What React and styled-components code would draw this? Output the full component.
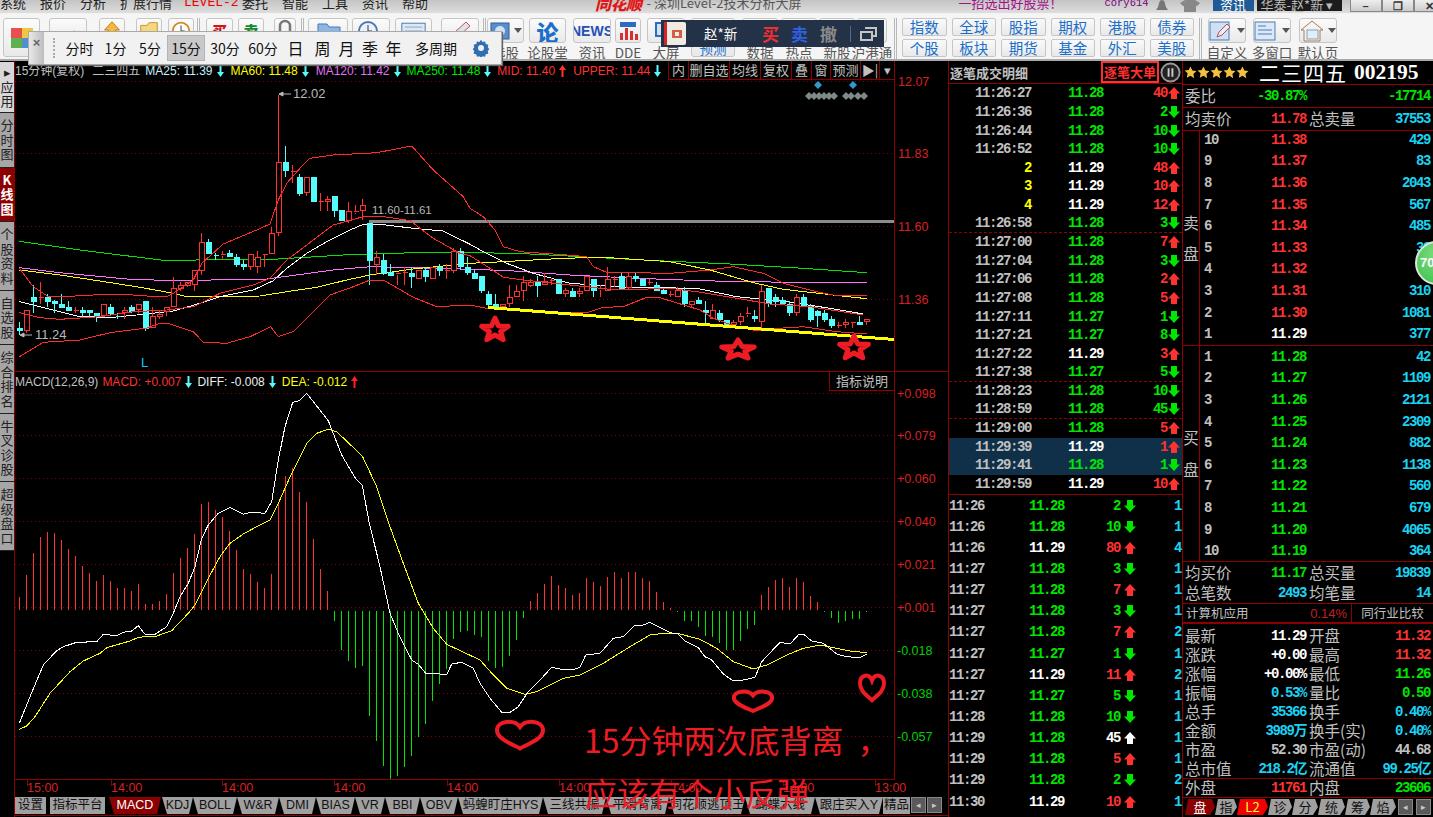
import React from 'react';
import styled, { createGlobalStyle } from 'styled-components';

const CJK = '"Noto Sans CJK SC", sans-serif';
const SANS = '"Liberation Sans", "Noto Sans CJK SC", sans-serif';
const MONO = '"Liberation Mono", "Noto Sans CJK SC", monospace';

const LINE = '#8b0000';
const RED = '#ff3232';
const GREEN = '#00e600';
const CYAN = '#19d3f3';
const AQUA = '#54fcfc';
const GREY = '#c0c0c0';

const GlobalStyle = createGlobalStyle`
  html, body {
    margin: 0;
    padding: 0;
    background: #000;
    overflow: hidden;
  }
  * { box-sizing: border-box; }
`;

const Page = styled.div`
  position: relative;
  width: 1433px;
  height: 817px;
  overflow: hidden;
  background: #000;
  font-family: ${CJK};
`;

/* ---------- title bar ---------- */
const TitleBar = styled.div`
  display: flex;
  align-items: flex-start;
  height: 14px;
  overflow: hidden;
  background: linear-gradient(#c4c4c4, #dedede);
  border-bottom: 1px solid #f2f2f2;
`;
const MenuItem = styled.span`
  flex: none;
  width: 40px;
  margin-top: -7px;
  font: ${(p) => (p.$level ? `13px ${MONO}` : `13px ${CJK}`)};
  line-height: 20px;
  color: ${(p) => (p.$level ? '#f00000' : '#222')};
  white-space: nowrap;
`;
const LevelSlot = styled(MenuItem)`
  width: 58px;
  margin-left: 24px;
`;
const Logo = styled.span`
  flex: none;
  margin: -7px 0 0 153px;
  font: italic 900 16px/20px ${CJK};
  color: #e01818;
  letter-spacing: -0.5px;
`;
const AppTitle = styled.span`
  flex: none;
  margin: -7px 0 0 5px;
  font: 13px/20px ${CJK};
  color: #555;
`;
const Slogan = styled.span`
  flex: none;
  margin: -7px 0 0 157px;
  font: 13px/20px ${CJK};
  color: #a4108c;
`;
const UserName = styled.span`
  flex: none;
  margin: -7px 0 0 42px;
  font: 10.5px/20px ${MONO};
  color: #800080;
`;
const NewsBtn = styled.span`
  flex: none;
  width: 41px;
  height: 11px;
  margin-left: 13px;
  background: #1d5a96;
  color: #fff;
  font: 13px/10px ${CJK};
  text-align: center;
`;
const AccountBtn = styled.span`
  flex: none;
  width: 85px;
  height: 11px;
  margin-left: 3px;
  padding-left: 4px;
  background: #1c1c1c;
  color: #bbb;
  font: 13px/9px ${CJK};
  white-space: nowrap;
`;
const WinBtn = styled.span`
  flex: none;
  display: flex;
  align-items: center;
  justify-content: center;
  width: 32px;
  height: 12px;
  border: 1px solid #888;
  border-top: none;
  background: linear-gradient(#eee, #ccc);
  color: #333;
  font: bold 11px/10px ${SANS};
`;
const WinGroup = styled.div`
  flex: none;
  display: flex;
  margin-left: 8px;
`;
const FadedIcon = styled.svg`
  flex: none;
  margin-left: ${(p) => p.$ml}px;
`;

/* ---------- toolbar ---------- */
const Toolbar = styled.div`
  display: flex;
  align-items: flex-start;
  height: 47px;
  padding: 4px 0 0 3px;
  overflow: hidden;
  background: #f5f5f5;
  border-bottom: 2px solid #a8a8a8;
`;
const Slot = styled.div`
  flex: none;
  display: flex;
  flex-direction: column;
  align-items: center;
  width: ${(p) => p.$w}px;
  margin-left: ${(p) => p.$ml || 0}px;
`;
const Face = styled.div`
  display: flex;
  align-items: ${(p) => (p.$tall ? 'flex-end' : 'center')};
  justify-content: center;
  width: 100%;
  height: ${(p) => (p.$tall ? 39 : 25)}px;
  overflow: hidden;
  background: linear-gradient(#fbfbfb, #e9e9e9);
  border: 1px solid #c6c6c6;
  border-radius: 3px;
`;
const ToolLabel = styled.span`
  margin-top: 1px;
  font: 13.5px/16px ${CJK};
  color: #555;
  white-space: nowrap;
`;
const BlueGlyph = styled.span`
  font: ${(p) => p.$weight || 900} ${(p) => p.$size}px/1 ${(p) => p.$font || CJK};
  color: ${(p) => p.$color || '#1b6fc9'};
  line-height: ${(p) => p.$lh || 'normal'};
`;
const SplitArrow = styled.span`
  flex: none;
  width: 0;
  height: 0;
  margin-left: 4px;
  border: 4px solid transparent;
  border-top: 5px solid #555;
  border-bottom: none;
`;
const Sep = styled.div`
  flex: none;
  width: 3px;
  height: 41px;
  margin-left: ${(p) => p.$ml}px;
  border-left: 1px solid #b8b8b8;
  border-right: 1px solid #b8b8b8;
`;
const QuickGrid = styled.div`
  flex: none;
  display: grid;
  grid-template-columns: repeat(6, 1fr);
  grid-auto-rows: 18px;
  gap: 3px 5px;
  width: 292px;
  margin-left: 5px;
`;
const QuickBtn = styled.div`
  background: linear-gradient(#fafafa, #e9e9e9);
  border: 1px solid #c6c6c6;
  border-radius: 2px;
  color: #1b6fc9;
  font: 14.5px/16px ${CJK};
  text-align: center;
`;

/* ---------- main ---------- */
const Main = styled.div`
  display: flex;
  height: 756px;
`;
const SideTabs = styled.div`
  flex: none;
  display: flex;
  flex-direction: column;
  width: 14px;
  padding-top: 1px;
  background: #000;
`;
const SideTab = styled.div`
  display: flex;
  flex-direction: column;
  align-items: center;
  justify-content: center;
  height: ${(p) => p.$h}px;
  overflow: hidden;
  background: ${(p) => (p.$active ? '#8b0000' : p.$light ? '#d8d8d8' : '#a6a6a6')};
  border-bottom: 1px solid #222;
  color: ${(p) => (p.$active ? '#fff' : '#222')};
  font: ${(p) => (p.$active ? 'bold ' : '')}13px/14.5px ${CJK};
  width: 14px;
  word-break: break-all;
  text-align: center;
`;
const ChartColumn = styled.div`
  flex: none;
  display: flex;
  flex-direction: column;
  width: 934px;
  border-left: 1px solid ${LINE};
`;
const LegendRow = styled.div`
  flex: none;
  display: flex;
  align-items: center;
  height: ${(p) => p.$h}px;
  padding-right: 53px;
  white-space: nowrap;
  overflow: hidden;
`;
const LegendText = styled.span`
  flex: none;
  margin-left: ${(p) => p.$ml || 0}px;
  font: 12px/1 ${SANS};
  color: ${(p) => p.$color};
`;
const LegendArrow = styled.svg`
  flex: none;
  margin-left: 4px;
`;
const ButtonStrip = styled.div`
  flex: none;
  display: flex;
  height: 19px;
  margin-left: auto;
  border: 1px solid ${LINE};
  border-top: none;
`;
const StripBtn = styled.span`
  width: ${(p) => p.$w}px;
  border-right: 1px solid ${LINE};
  color: ${GREY};
  font: 13px/18px ${CJK};
  text-align: center;
  white-space: nowrap;
  &:last-child { border-right: none; }
`;
const ExplainBtn = styled.span`
  flex: none;
  width: 66px;
  height: 19px;
  margin-left: auto;
  border: 1px solid ${LINE};
  border-top: none;
  color: ${GREY};
  font: 13px/18px ${CJK};
  text-align: center;
`;
const ChartSvg = styled.svg`
  display: block;
  flex: none;
  overflow: visible;
`;
const AxisText = styled.text`
  font: 12.5px ${SANS};
  fill: ${(p) => p.$color || '#d82020'};
`;
const NoteText = styled.text`
  font: ${(p) => p.$size || 13}px ${SANS};
  fill: ${(p) => p.$color || '#b8b8b8'};
`;

const IndicatorTabs = styled.div`
  flex: none;
  display: flex;
  align-items: flex-start;
  height: 19px;
  border-bottom: 1px solid ${LINE};
`;
const IndicatorTab = styled.span`
  flex: none;
  width: ${(p) => p.$w}px;
  margin-left: ${(p) => p.$ml || 0}px;
  height: 17px;
  overflow: hidden;
  background: ${(p) => (p.$active ? '#8b0000' : '#a0a0a0')};
  color: ${(p) => (p.$active ? '#fff' : '#111')};
  clip-path: ${(p) =>
    p.$flat ? 'none' : 'polygon(0 0, 100% 0, calc(100% - 4px) 100%, 5px 100%)'};
  font: 12.5px/16px ${SANS};
  text-align: center;
  white-space: nowrap;
`;
const ScrollBtn = styled.span`
  flex: none;
  display: flex;
  align-items: center;
  justify-content: center;
  width: ${(p) => p.$w || 15}px;
  height: 16px;
  margin-left: ${(p) => p.$ml || 1}px;
  background: #5a5a5a;
  border: 1px solid #888;
  color: #c8c8c8;
  font: 9px/1 ${SANS};
`;

/* ---------- tick list ---------- */
const TickPanel = styled.div`
  flex: none;
  display: flex;
  flex-direction: column;
  width: 235px;
  overflow: hidden;
  border-left: 1px solid ${LINE};
  border-right: 1px solid ${LINE};
`;
const TickHeader = styled.div`
  flex: none;
  display: flex;
  align-items: center;
  height: 23px;
  padding-left: 1px;
  border-bottom: 1px solid ${LINE};
  color: ${GREY};
  font: bold 13px/1 ${CJK};
  white-space: nowrap;
`;
const BigOrderTag = styled.span`
  flex: none;
  display: block;
  width: 58px;
  height: 22px;
  margin-left: 73px;
  border: 2px solid #ff3030;
  color: #ff3030;
  font: bold 13px/18px ${CJK};
  text-align: center;
`;
const PauseBtn = styled.svg`
  flex: none;
  margin-left: 1px;
`;
const Num = styled.span`
  font: bold 14px/1 ${MONO};
  letter-spacing: -1.4px;
  color: ${(p) => p.$color || GREY};
  text-align: ${(p) => p.$align || 'right'};
  white-space: nowrap;
`;
const TickRow = styled.div`
  display: grid;
  grid-template-columns: 82px 72px 64px 13px;
  align-items: center;
  height: 18.62px;
  background: ${(p) => (p.$selected ? '#0f3048' : 'transparent')};
  border-bottom: ${(p) => (p.$dashed ? `1px dashed ${LINE}` : 'none')};
`;
const TickArrowCell = styled.span`
  display: flex;
  justify-content: flex-end;
`;
const TickList = styled.div`
  flex: none;
  height: 411px;
  border-bottom: 1px solid ${LINE};
`;
const VolumeRow = styled.div`
  display: grid;
  grid-template-columns: 59px 56px 56px 16px 45px;
  align-items: center;
  height: 21.15px;
`;

/* ---------- quote panel ---------- */
const QuotePanel = styled.div`
  flex: none;
  display: flex;
  flex-direction: column;
  width: 250px;
  overflow: hidden;
`;
const NameRow = styled.div`
  flex: none;
  display: flex;
  align-items: center;
  height: 24px;
  padding-left: 1px;
  border-bottom: 1px solid ${LINE};
`;
const StockName = styled.span`
  margin-left: 10px;
  color: #fff;
  font: 21px/1 ${CJK};
  letter-spacing: 1px;
`;
const StockCode = styled.span`
  margin-left: 7px;
  color: #fff;
  font: bold 21.5px/1 "Liberation Serif", serif;
`;
const QuoteRow = styled.div`
  flex: none;
  display: grid;
  grid-template-columns: 121px 3px 121px;
  align-items: center;
  height: ${(p) => p.$h}px;
  padding-left: 2px;
  border-bottom: ${(p) => (p.$line ? `1px solid ${LINE}` : 'none')};
`;
const QuoteCell = styled.div`
  display: flex;
  align-items: center;
  justify-content: space-between;
  white-space: nowrap;
`;
const Gap = styled.span``;
const Label = styled.span`
  color: ${GREY};
  font: 15.5px/1 ${CJK};
`;
const Book = styled.div`
  flex: none;
  display: flex;
  height: ${(p) => p.$h}px;
  border-bottom: 1px solid ${LINE};
`;
const BookSide = styled.div`
  flex: none;
  display: flex;
  flex-direction: column;
  align-items: center;
  justify-content: center;
  gap: 16px;
  width: 17px;
  border-right: 1px solid ${LINE};
  color: ${GREY};
  font: 15.5px/1 ${CJK};
`;
const BookRows = styled.div`
  flex: 1;
  margin-top: ${(p) => p.$mt || 0}px;
`;
const BookRow = styled.div`
  display: grid;
  grid-template-columns: 30px 72px 124px;
  align-items: center;
  height: 21.62px;
  padding-left: 4px;
`;
const SectorRow = styled.div`
  flex: none;
  display: grid;
  grid-template-columns: 169px 1fr;
  align-items: center;
  height: 20px;
  border-bottom: 2px solid ${LINE};
`;
const SectorCell = styled.div`
  display: flex;
  align-items: center;
  justify-content: space-between;
  height: 100%;
  padding: 0 4px 0 3px;
  border-right: 1px solid ${LINE};
  font: 12.5px/1 ${CJK};
  color: ${GREY};
`;
const CompareCell = styled.div`
  color: ${GREY};
  font: 12.5px/1 ${CJK};
  text-align: center;
`;
const PercentSmall = styled.span`
  color: #c02020;
  font: 13px/1 ${SANS};
`;
const Stats = styled.div`
  flex: none;
  padding-top: 2px;
  border-bottom: 1px solid ${LINE};
`;
const PanelTabs = styled.div`
  flex: none;
  display: flex;
  align-items: center;
  height: 19px;
  padding-left: 2px;
  border-top: 1px solid ${LINE};
`;
const PanelTab = styled.span`
  flex: none;
  width: ${(p) => p.$w}px;
  height: 16px;
  background: ${(p) => (p.$hot ? '#f00000' : p.$active ? '#8b0000' : '#a0a0a0')};
  color: ${(p) => (p.$hot ? '#ffff30' : p.$active ? '#fff' : '#111')};
  clip-path: polygon(3px 0, calc(100% - 3px) 0, 100% 50%, calc(100% - 5px) 100%, 0 100%);
  font: 13px/15px ${CJK};
  text-align: center;
`;

/* ---------- overlays ---------- */
const FloatBar = styled.div`
  position: absolute;
  left: 28px;
  top: 31px;
  display: flex;
  align-items: center;
  width: 474px;
  height: 34px;
  padding-right: 11px;
  background: #f1f1f1;
  border: 1px solid #a9a9a9;
  box-shadow: 1px 1px 1px #666;
`;
const FloatClose = styled.span`
  flex: none;
  width: 15px;
  height: 100%;
  background: linear-gradient(90deg, #e8e8e8, #bdbdbd);
  color: #666;
  font: bold 13px/22px ${SANS};
  text-align: center;
`;
const Grip = styled.span`
  flex: none;
  width: 2px;
  height: 20px;
  margin: 0 6px 0 9px;
  border-left: 2px dotted #aaa;
`;
const PeriodBtn = styled.span`
  flex: none;
  display: block;
  width: ${(p) => p.$w}px;
  height: 26px;
  background: ${(p) => (p.$on ? '#c9c9c9' : 'transparent')};
  border: 1px solid ${(p) => (p.$on ? '#b4b4b4' : 'transparent')};
  color: #111;
  font: ${(p) => p.$size || 14}px/24px ${CJK};
  text-align: center;
  white-space: nowrap;
`;
const GearIcon = styled.svg`
  flex: none;
  margin-left: auto;
`;
const AccountPanel = styled.div`
  position: absolute;
  left: 661px;
  top: 20px;
  display: flex;
  align-items: center;
  width: 223px;
  height: 27px;
  background: #243247;
`;
const AccountName = styled.span`
  margin-left: 17px;
  width: 52px;
  color: #fff;
  font: 13.5px/1 ${CJK};
`;
const TradeBtn = styled.span`
  width: 29px;
  text-align: center;
  color: ${(p) => p.$color};
  font: bold 17px/1 ${CJK};
`;
const PanelDivider = styled.span`
  width: 1px;
  height: 16px;
  margin: 0 9px 0 7px;
  background: #566a88;
`;
const Ball = styled.div`
  position: absolute;
  left: 1415px;
  top: 241px;
  width: 44px;
  height: 44px;
  border: 2px solid #d8e8d8;
  border-radius: 50%;
  background: radial-gradient(circle at 50% 30%, #7fdc7f, #3cc04c);
  color: #fff;
  font: bold 13px/40px ${SANS};
  padding-left: 3px;
`;
const Note = styled.div`
  position: absolute;
  left: ${(p) => p.$x}px;
  top: ${(p) => p.$y}px;
  color: #ed1c24;
  font: 32px/1 ${CJK};
  white-space: nowrap;
`;
const NoteComma = styled.span`
  margin-left: 14px;
`;

/* ---------- chart data ---------- */
// candles were read from the picture: body top, body bottom, wick top, wick bottom, colour
const candlesA = [
  [714, 722, 697, 735, 'c'], [661, 722, 661, 730, 'r'], [621, 633, 585, 668, 'c'], [622, 623, 576, 642, 'r'],
  [621, 633, 612, 650, 'c'], [634, 640, 630, 668, 'c'], [642, 651, 612, 655, 'c'], [651, 660, 633, 662, 'c'],
  [660, 661, 652, 670, 'r'], [660, 668, 652, 682, 'c'], [660, 668, 660, 680, 'c'], [670, 680, 670, 695, 'c'],
  [643, 675, 643, 675, 'r'], [652, 670, 643, 678, 'c'], [678, 680, 670, 686, 'c'], [662, 668, 652, 686, 'r'],
  [652, 665, 645, 668, 'c'], [643, 658, 643, 668, 'r'], [633, 715, 633, 722, 'c'], [679, 712, 652, 712, 'r'],
  [672, 678, 660, 686, 'r'], [652, 665, 652, 678, 'r'], [595, 650, 560, 650, 'r'], [586, 595, 575, 602, 'r'],
  [578, 586, 575, 592, 'r'], [541, 584, 541, 602, 'r'], [457, 540, 430, 556, 'r'], [457, 491, 447, 491, 'c'],
  [497, 499, 490, 510, 'c'], [494, 499, 484, 510, 'r'], [491, 499, 481, 499, 'c'], [502, 522, 491, 530, 'c'],
  [522, 530, 510, 540, 'c'], [493, 530, 493, 540, 'r'], [502, 530, 484, 548, 'r'], [493, 495, 493, 530, 'r'],
  [430, 491, 410, 491, 'r'], [217, 428, 15, 438, 'r'], [217, 242, 168, 260, 'c'], [244, 246, 225, 278, 'r'],
  [261, 309, 252, 317, 'c'], [261, 308, 261, 318, 'r'], [261, 335, 261, 335, 'c'], [335, 337, 310, 362, 'r'],
  [327, 335, 318, 362, 'r'], [318, 362, 318, 380, 'c'], [362, 390, 362, 390, 'c'], [363, 390, 336, 398, 'r'],
  [365, 370, 345, 372, 'r'], [346, 362, 327, 390, 'r'], [400, 510, 400, 584, 'c'], [502, 522, 484, 555, 'r'],
  [510, 550, 492, 555, 'c'], [546, 556, 522, 556, 'c'], [550, 555, 550, 585, 'r'], [547, 548, 530, 585, 'r'],
  [549, 558, 530, 594, 'c'], [540, 566, 540, 566, 'r'], [540, 558, 530, 575, 'c'], [532, 566, 532, 566, 'r'],
  [532, 540, 522, 558, 'c'], [540, 541, 522, 566, 'r'], [485, 540, 475, 548, 'r'], [485, 530, 475, 540, 'c'],
  [532, 548, 502, 555, 'c'], [550, 566, 540, 566, 'c'],
];
const candlesB = [
  [228, 272, 228, 280, 'c'], [282, 312, 272, 325, 'c'], [312, 322, 282, 325, 'c'], [313, 319, 313, 322, 'r'],
  [292, 311, 255, 320, 'r'], [273, 290, 255, 290, 'r'], [247, 272, 228, 302, 'r'], [246, 255, 238, 262, 'r'],
  [245, 255, 228, 290, 'c'], [245, 254, 218, 255, 'r'], [240, 242, 235, 255, 'r'], [238, 281, 238, 281, 'c'],
  [272, 280, 264, 290, 'r'], [273, 290, 264, 290, 'c'], [273, 280, 264, 290, 'r'], [228, 272, 228, 272, 'r'],
  [238, 272, 238, 290, 'c'], [265, 270, 255, 290, 'r'], [238, 272, 202, 272, 'r'], [237, 238, 228, 262, 'r'],
  [229, 264, 220, 270, 'c'], [230, 262, 220, 270, 'r'], [228, 235, 220, 245, 'c'], [237, 255, 237, 255, 'c'],
  [246, 248, 237, 255, 'r'], [256, 272, 246, 272, 'c'], [272, 281, 264, 281, 'c'], [283, 284, 272, 290, 'r'],
  [272, 290, 262, 290, 'r'], [272, 310, 262, 320, 'c'], [305, 312, 305, 320, 'r'], [302, 311, 292, 311, 'c'],
  [330, 338, 302, 372, 'c'], [330, 356, 312, 356, 'r'], [340, 357, 330, 366, 'c'], [360, 375, 360, 375, 'c'],
  [367, 374, 360, 375, 'r'], [348, 365, 340, 375, 'r'], [340, 345, 322, 352, 'r'], [348, 356, 330, 366, 'c'],
  [273, 364, 255, 385, 'r'], [264, 310, 264, 320, 'c'], [292, 303, 282, 320, 'c'], [302, 311, 292, 311, 'c'],
  [312, 338, 302, 348, 'c'], [292, 338, 282, 348, 'r'], [292, 320, 282, 320, 'c'], [320, 357, 312, 366, 'c'],
  [335, 347, 330, 382, 'c'], [339, 357, 330, 366, 'c'], [357, 375, 348, 384, 'c'], [375, 376, 367, 384, 'r'],
  [367, 373, 358, 384, 'r'], [367, 369, 367, 384, 'r'], [367, 374, 348, 374, 'c'], [358, 364, 358, 374, 'r'],
];
const candles = [
  ...candlesA.map((c) => [...c.slice(0, 4).map((v) => 90 + v / 3), c[4]]),
  ...candlesB.map((c) => [...c.slice(0, 4).map((v) => 200 + v / 3), c[4]]),
];

const barX = (i) => Math.floor(19.33 + 7 * i) + 0.5;

// two traced halves of each line, joined into one polyline in page coordinates
const line = (a, ax, ay, b, bx, by) =>
  [
    ...a.map(([x, y]) => [ax + x / 3, ay + y / 3]),
    ...b.map(([x, y]) => [bx + x / 3, by + y / 3]),
  ]
    .map(([x, y]) => `${x.toFixed(1)},${y.toFixed(1)}`)
    .join(' ');

const upperA = [[58,535],[100,590],[142,618],[190,620],[280,615],[320,613],[400,615],[470,620],[500,620],[520,610],[580,570],[605,520],[670,462],[770,420],[810,402],[835,330],[860,280],[900,235],[930,205],[1000,195],[1130,188],[1235,168],[1300,240],[1390,320]];
const upperB = [[0,25],[40,50],[75,90],[100,140],[150,155],[290,165],[350,170],[370,200],[410,217],[600,220],[720,210],[790,200],[880,220],[940,250],[1040,275],[1090,285],[1190,287]];
const whiteA = [[58,635],[120,650],[180,665],[240,680],[340,682],[440,672],[520,663],[600,640],[660,620],[760,600],[820,572],[860,535],[920,490],[980,455],[1050,420],[1090,403],[1140,403],[1240,415],[1330,423]];
const whiteB = [[0,133],[40,155],[110,190],[190,220],[300,250],[470,262],[680,265],[800,290],[950,305],[1080,325],[1180,342]];
const midA = [[58,668],[120,683],[180,688],[300,680],[400,665],[500,660],[580,650],[660,610],[760,585],[810,565],[860,510],[920,465],[1000,405],[1090,380],[1140,378],[1230,392],[1300,445],[1380,490]];
const midB = [[0,167],[60,205],[100,232],[160,240],[300,255],[440,270],[600,265],[680,275],[800,295],[900,312],[1020,320],[1180,345]];
const lowerA = [[58,800],[130,757],[240,750],[330,728],[440,714],[480,700],[510,702],[580,725],[610,757],[680,760],[750,740],[812,710],[835,740],[880,725],[990,615],[1060,590],[1110,570],[1150,570],[1240,622],[1310,650]];
const lowerB = [[0,315],[50,325],[300,338],[350,338],[400,322],[460,320],[530,292],[570,293],[690,330],[730,355],[800,380],[860,392],[940,384],[1000,380],[1100,395],[1190,402]];
const ma60A = [[58,540],[180,555],[300,573],[420,592],[520,610],[560,620],[780,618],[860,605],[950,592],[1040,570],[1110,555],[1240,537]];
const ma60B = [[0,190],[100,185],[280,175],[400,172],[600,185],[720,210],[850,248],[940,268],[1090,285],[1190,296]];
const ma120A = [[58,533],[180,548],[380,567],[520,572],[800,567],[1000,540],[1110,530],[1240,533]];
const ma120B = [[0,208],[120,212],[300,225],[500,235],[640,240],[800,245],[1000,247],[1190,246]];
const ma250A = [[58,454],[240,480],[490,511],[820,508],[1030,495],[1240,488]];
const ma250B = [[0,158],[140,160],[560,182],[780,192],[1000,205],[1190,218]];

const diffA = [[58,1030],[90,950],[130,855],[170,812],[190,800],[230,787],[290,785],[310,763],[350,767],[370,757],[395,753],[415,737],[435,763],[465,763],[500,740],[520,700],[540,650],[565,610],[585,560],[605,475],[625,435],[655,400],[690,382],[730,403],[750,397],[795,400],[815,365],[835,240],[855,140],[878,67],[898,62],[920,40],[985,122],[1025,225],[1065,293],[1087,316],[1108,430],[1140,560],[1170,700],[1195,760],[1235,840],[1255,853],[1277,880],[1300,880],[1340,884],[1355,852],[1385,847],[1420,865]];
const diffB = [[30,310],[60,355],[95,397],[120,397],[145,380],[175,335],[210,300],[245,262],[270,267],[305,270],[330,262],[347,225],[390,220],[430,175],[460,170],[495,135],[520,135],[540,127],[600,158],[625,162],[645,183],[685,203],[705,230],[725,240],[760,282],[790,303],[820,300],[855,292],[875,245],[930,187],[960,192],[985,165],[1000,162],[1025,183],[1060,190],[1100,222],[1130,230],[1170,233],[1190,222]];
const deaA = [[58,1048],[80,1038],[105,1010],[150,940],[210,875],[250,843],[300,820],[320,803],[390,783],[415,772],[470,768],[515,752],[565,700],[585,675],[625,595],[660,530],[690,490],[730,462],[770,440],[810,420],[835,370],[875,280],[920,190],[950,160],[985,148],[1010,155],[1087,228],[1130,320],[1170,440],[1210,550],[1255,670],[1300,745],[1340,793]];
const deaB = [[30,240],[70,285],[110,325],[165,343],[200,335],[280,295],[330,285],[400,250],[480,200],[540,165],[580,160],[630,162],[690,178],[740,205],[790,245],[850,267],[890,255],[950,225],[1000,205],[1050,195],[1100,205],[1150,215],[1190,217]];

// MACD columns: tops for the red ones, bottoms for the green ones
const redTops = [652,585,519,471,456,459,480,507,528,558,579,603,585,603,624,624,633,612,672,672,663,642,579,534,504,462,372,366,390,411,453,510,567,582,606,624,582,372,288,264,336,366,477,567,633];
const greenBottoms = [723,810,843,864,858,1008,1083,1158,1197,1188,1161,1128,1071,1032,963,912,867,777,756,753,765];
const greenTail = [170,243,265,262,228,180,113];
const redMid = [123,99,72,48,75,84,105,99,54,66,78,51,36,54,36,36,54,63,96,126,144];
const greenMid = [122,122,140,167,170,190,210,210,183,147,135];
const redEnd = [105,81,60,54,81,54,66,108,126];
const greenEnd = [113,128,122,117,117,95];

const macdBars = [
  ...redTops.map((v) => ['r', 380 + v / 3]),
  ...greenBottoms.map((v) => ['g', 380 + v / 3]),
  ...greenTail.map((v) => ['g', 580 + v / 3]),
  ...redMid.map((v) => ['r', 560 + v / 3]),
  ['g', 612],
  ...greenMid.map((v) => ['g', 580 + v / 3]),
  ...redEnd.map((v) => ['r', 560 + v / 3]),
  ['g', 612],
  ...greenEnd.map((v) => ['g', 580 + v / 3]),
];

const upperGrid = [81, 153, 226, 299];
const lowerGrid = [
  [393, '+0.098', 'r'], [435, '+0.079', 'r'], [478, '+0.060', 'r'], [521, '+0.040', 'r'], [564, '+0.021', 'r'],
  [607, '+0.001', 'r'], [650, '-0.018', 'g'], [693, '-0.038', 'g'], [736, '-0.057', 'g'],
];
const timeLabels = [[27, '15:00'], [111, '14:00'], [222, '14:00'], [334, '14:00'], [447, '14:00'], [559, '14:00'], [671, '14:00'], [783, '14:00'], [875, '13:00']];

const starPath = (cx, cy, rx, ry) => {
  const pts = [];
  for (let i = 0; i < 10; i++) {
    const a = -Math.PI / 2 + (i * Math.PI) / 5;
    const k = i % 2 ? 0.42 : 1;
    pts.push(`${(cx + rx * k * Math.cos(a)).toFixed(1)},${(cy + ry * k * Math.sin(a)).toFixed(1)}`);
  }
  return `M${pts.join('L')}Z`;
};

const Candle = ({ i, c }) => {
  const [top, bot, high, low, kind] = c;
  const x = barX(i);
  const color = kind === 'r' ? RED : AQUA;
  return (
    <g stroke={color} fill={kind === 'r' ? '#000' : AQUA}>
      <line x1={x} x2={x} y1={high} y2={top} />
      <line x1={x} x2={x} y1={bot} y2={low} />
      {bot - top < 2 ? (
        <line x1={x - 2} x2={x + 3} y1={top} y2={top} />
      ) : (
        <rect x={x - 2.5} y={top} width={5} height={bot - top} />
      )}
    </g>
  );
};

const UpperChart = () => (
  <ChartSvg width={933} height={292} viewBox="15 80 933 292">
    <g shapeRendering="crispEdges">
      {upperGrid.map((y) => (
        <line key={y} x1={15} x2={894} y1={y + 0.5} y2={y + 0.5} stroke={LINE} strokeDasharray="1 3" />
      ))}
      <line x1={894.5} x2={894.5} y1={80} y2={372} stroke={LINE} />
      <line x1={15} x2={948} y1={371.5} y2={371.5} stroke={LINE} />
      <line x1={369} x2={894} y1={221.5} y2={221.5} stroke="#8c8c8c" strokeWidth={3} />
    </g>
    <g fill="none" strokeWidth={1} shapeRendering="crispEdges">
      <polyline points={line(ma250A, 0, 90, ma250B, 470, 200)} stroke="#00e600" />
      <polyline points={line(ma120A, 0, 90, ma120B, 470, 200)} stroke="#ff70ff" />
      <polyline points={line(ma60A, 0, 90, ma60B, 470, 200)} stroke="#ffff00" />
      <polyline points={line(whiteA, 0, 90, whiteB, 470, 200)} stroke="#ffffff" />
    </g>
    <g shapeRendering="crispEdges">
      {candles.map((c, i) => (
        <Candle key={i} i={i} c={c} />
      ))}
    </g>
    <g fill="none" stroke="#ff2a2a" strokeWidth={1} shapeRendering="crispEdges">
      <polyline points={line(upperA, 0, 90, upperB, 470, 200)} />
      <polyline points={line(midA, 0, 90, midB, 470, 200)} />
      <polyline points={line(lowerA, 0, 90, lowerB, 470, 200)} />
    </g>
    <line x1={488} y1={307.5} x2={894} y2={339.5} stroke="#ffff00" strokeWidth={3} shapeRendering="crispEdges" />
    <g stroke="#b8b8b8" fill="#b8b8b8">
      <path d="M279 94H291M279 94l4 -2v4z" />
      <path d="M20 335H32M20 335l4 -2v4z" />
    </g>
    <NoteText x={293} y={98}>12.02</NoteText>
    <NoteText x={35} y={339}>11.24</NoteText>
    <NoteText x={372} y={214} $size={11.5}>11.60-11.61</NoteText>
    <NoteText x={141} y={367} $color="#19c8f0">L</NoteText>
    {[
      [818, 85, '#2d9bd0'], [853, 85, '#2d9bd0'],
      ...[811, 816, 821, 826, 831, 836, 848, 853, 860, 866].map((x) => [x - 2, 96, '#7f8a88']),
    ].map(([x, y, f]) => (
      <path key={`${x}-${y}`} d={`M${x} ${y - 4}l4 4l-4 4l-4 -4z`} fill={f} />
    ))}
    <AxisText x={898} y={86}>12.07</AxisText>
    <AxisText x={898} y={158}>11.83</AxisText>
    <AxisText x={898} y={231}>11.60</AxisText>
    <AxisText x={898} y={304}>11.36</AxisText>
    <g fill="none" stroke="#ed1c24" strokeWidth={5} strokeLinejoin="round">
      <path d={starPath(495, 330, 14, 12)} />
      <path d={starPath(738, 350, 17, 10)} />
      <path d={starPath(854, 348, 15, 12)} />
    </g>
  </ChartSvg>
);

const heart = 'M0 -6C-6 -16 -24 -14 -24 -2C-24 8 -10 14 0 20C10 14 24 8 24 -2C24 -14 6 -16 0 -6Z';

const LowerChart = () => (
  <ChartSvg width={933} height={406} viewBox="15 391 933 406">
    <g shapeRendering="crispEdges">
      {lowerGrid.map(([y]) => (
        <line key={y} x1={15} x2={894} y1={y + 0.5} y2={y + 0.5} stroke={LINE} strokeDasharray="1 3" />
      ))}
      <line x1={894.5} x2={894.5} y1={391} y2={780} stroke={LINE} />
      <line x1={15} x2={894} y1={779.5} y2={779.5} stroke={LINE} />
      {timeLabels.map(([x]) => (
        <line key={x} x1={x + 0.5} x2={x + 0.5} y1={780} y2={786} stroke={LINE} />
      ))}
      {macdBars.map(([kind, v], i) =>
        kind === 'r' ? (
          <line key={i} x1={barX(i)} x2={barX(i)} y1={v} y2={610} stroke={RED} />
        ) : (
          <line key={i} x1={barX(i)} x2={barX(i)} y1={611} y2={v} stroke={GREEN} />
        )
      )}
    </g>
    <g fill="none" strokeWidth={1} shapeRendering="crispEdges">
      <polyline points={line(deaA, 0, 380, deaB, 470, 580)} stroke="#ffff00" />
      <polyline points={line(diffA, 0, 380, diffB, 470, 580)} stroke="#ffffff" />
    </g>
    {lowerGrid.map(([y, t, k]) => (
      <AxisText key={y} x={897} y={y + 5} $color={k === 'r' ? '#d82020' : '#00d000'}>{t}</AxisText>
    ))}
    {timeLabels.map(([x, t], i) => (
      <AxisText key={i} x={x} y={792}>{t}</AxisText>
    ))}
    <g fill="none" stroke="#ed1c24" strokeWidth={4}>
      <path d={heart} transform="translate(520 732) scale(0.96 0.82)" vectorEffect="non-scaling-stroke" />
      <path d={heart} transform="translate(753 699) scale(0.8 0.6)" vectorEffect="non-scaling-stroke" />
      <path d={heart} transform="translate(872 685) scale(0.5 0.76)" vectorEffect="non-scaling-stroke" />
    </g>
  </ChartSvg>
);

/* ---------- small parts ---------- */
const Arrow = ({ up, color }) => (
  <svg width={12} height={12} viewBox="0 0 12 11" preserveAspectRatio="none">
    <path d={up ? 'M6 0L12 6H9V11H3V6H0Z' : 'M3 0H9V5H12L6 11L0 5H3Z'} fill={color} />
  </svg>
);

const LegendMark = ({ up, color }) => (
  <LegendArrow width={7} height={12} viewBox="0 0 7 12">
    <path d={up ? 'M3.5 0L7 5H4.5V12H2.5V5H0Z' : 'M2.5 0H4.5V7H7L3.5 12L0 7H2.5Z'} fill={color} />
  </LegendArrow>
);

const GoldStar = () => (
  <svg width={13} height={13} viewBox="0 0 24 24">
    <path d="M12 1l3.4 7.2 7.6 1-5.6 5.4 1.4 7.9L12 17.8 5.2 21.5l1.4-7.9L1 8.2l7.6-1z" fill="#f3c142" />
  </svg>
);

const tools = [
  { w: 38, ml: 9, icon: <path d="M13 22l6 -10l6 10z" fill="#f0a030" /> },
  { w: 26, ml: 12, icon: <path d="M13 3l8 9h-4v10H9V12H5z" fill="#f6b93a" stroke="#b87a10" /> },
  { w: 26, ml: 11, icon: <path d="M4 7h7l2 -3h9v18H4z" fill="#f7d77c" stroke="#c09030" /> },
  { w: 26, ml: 6, icon: <g><circle cx="13" cy="13" r="9" fill="#fff" stroke="#d08820" strokeWidth="2" /><path d="M13 7v6h4" fill="none" stroke="#333" /></g> },
];
const tools2 = [
  { w: 27, ml: 6, color: '#d01818', text: '买' },
  { w: 26, ml: 5, color: '#128a30', text: '卖' },
];
const tools3 = [
  { w: 40, ml: 4, icon: <path d="M8 6h9l2 3h11v14H8z" fill="#88b8e8" stroke="#4878b0" /> },
  { w: 38, ml: 4, icon: <g><circle cx="15" cy="13" r="9" fill="#eaf2fb" stroke="#5078b0" strokeWidth="2" /><path d="M15 7v6h4" fill="none" stroke="#335" /></g> },
  { w: 37, ml: 5, icon: <g><rect x="6" y="5" width="24" height="16" fill="#dce8f6" stroke="#5078a8" /><path d="M9 9h18M9 13h18" stroke="#88a8c8" /></g> },
  { w: 38, ml: 9, icon: <path d="M10 21l3 -7l11 -10l4 4l-11 10z" fill="#d8e4f0" stroke="#c85050" /> },
];
const labelled = [
  { w: 36, ml: 7, label: '数据' },
  { w: 36, ml: 3, label: '热点' },
  { w: 36, ml: 2, label: '新股' },
  { w: 30, ml: 2, label: '沪港通' },
];
const quick = ['指数', '全球', '股指', '期权', '港股', '债券', '个股', '板块', '期货', '基金', '外汇', '美股'];

const sideTabs = [
  { h: 51, text: '应用', light: true, mark: true },
  { h: 55, text: '分时图' },
  { h: 54, text: 'K线图', active: true },
  { h: 69, text: '个股资料' },
  { h: 54, text: '自选股' },
  { h: 69, text: '综合排名' },
  { h: 68, text: '牛叉诊股' },
  { h: 69, text: '超级盘口' },
];

const stripBtns = [['内', 20], ['删自选', 41], ['均线', 31], ['复权', 31], ['叠', 20], ['窗', 19], ['预测', 30], ['▶|', 19], ['▾', 14]];

const ticks = [
  ['11:26:27', '11.28', 40, 1], ['11:26:36', '11.28', 2, 0], ['11:26:44', '11.28', 10, 0], ['11:26:52', '11.28', 10, 0],
  ['2', '11.29', 48, 1], ['3', '11.29', 10, 1], ['4', '11.29', 12, 1], ['11:26:58', '11.28', 3, 0, 'd'],
  ['11:27:00', '11.28', 7, 1], ['11:27:04', '11.28', 3, 0], ['11:27:06', '11.28', 2, 1], ['11:27:08', '11.28', 5, 1],
  ['11:27:11', '11.27', 1, 0], ['11:27:21', '11.27', 8, 0], ['11:27:22', '11.29', 3, 1], ['11:27:38', '11.27', 5, 0, 'd'],
  ['11:28:23', '11.28', 10, 0], ['11:28:59', '11.28', 45, 0, 'd'], ['11:29:00', '11.28', 5, 1],
  ['11:29:39', '11.29', 1, 1, 's'], ['11:29:41', '11.28', 1, 0, 's'], ['11:29:59', '11.29', 10, 1],
];
const volumes = [
  ['11:26', '11.28', 2, 0, 1], ['11:26', '11.28', 10, 0, 1], ['11:26', '11.29', 80, 1, 4], ['11:27', '11.28', 3, 0, 1],
  ['11:27', '11.28', 7, 1, 1], ['11:27', '11.28', 3, 0, 1], ['11:27', '11.28', 7, 1, 2], ['11:27', '11.27', 1, 0, 1],
  ['11:27', '11.29', 11, 1, 2], ['11:27', '11.27', 5, 0, 1], ['11:28', '11.28', 10, 0, 1], ['11:29', '11.28', 45, 2, 1],
  ['11:29', '11.28', 5, 1, 1], ['11:29', '11.28', 2, 0, 2], ['11:30', '11.29', 10, 1, 1],
];
const priceColor = (p) => (p === '11.29' ? '#fff' : GREEN);

const sells = [
  [10, '11.38', 429], [9, '11.37', 83], [8, '11.36', 2043], [7, '11.35', 567], [6, '11.34', 485],
  [5, '11.33', 38], [4, '11.32', 5], [3, '11.31', 310], [2, '11.30', 1081], [1, '11.29', 377],
];
const buys = [
  [1, '11.28', 42], [2, '11.27', 1109], [3, '11.26', 2121], [4, '11.25', 2309], [5, '11.24', 882],
  [6, '11.23', 1138], [7, '11.22', 560], [8, '11.21', 679], [9, '11.20', 4065], [10, '11.19', 364],
];
const stats = [
  ['最新', '11.29', '#fff', '开盘', '11.32', RED],
  ['涨跌', '+0.00', '#fff', '最高', '11.32', RED],
  ['涨幅', '+0.00%', '#fff', '最低', '11.26', GREEN],
  ['振幅', '0.53%', CYAN, '量比', '0.50', GREEN],
  ['总手', '35366', CYAN, '换手', '0.40%', CYAN],
  ['金额', '3989万', CYAN, '换手(实)', '0.40%', CYAN],
  ['市盈', '52.30', GREY, '市盈(动)', '44.68', GREY],
  ['总市值', '218.2亿', CYAN, '流通值', '99.25亿', CYAN],
];

const indicators = [
  { t: '设置', w: 31, ml: 0, flat: true }, { t: '指标平台', w: 55, ml: 4, flat: true }, { t: 'MACD', w: 52, ml: 4, active: true },
  { t: 'KDJ', w: 31, ml: 1 }, { t: 'BOLL', w: 44, ml: 0 }, { t: 'W&R', w: 42, ml: 0 }, { t: 'DMI', w: 37, ml: 0 },
  { t: 'BIAS', w: 39, ml: 0 }, { t: 'VR', w: 30, ml: 0 }, { t: 'BBI', w: 35, ml: 0 }, { t: 'OBV', w: 38, ml: 0 },
  { t: '蚂蝗盯庄HYS', w: 85, ml: 0 }, { t: '三线共振', w: 63, ml: 0 }, { t: '平滑背离', w: 63, ml: 0 },
  { t: '同花顺逃顶王', w: 76, ml: 0 }, { t: '蝴蝶六线', w: 70, ml: 0 }, { t: '跟庄买入Y', w: 68, ml: 0 }, { t: '精品', w: 27, ml: 0, flat: true },
];

const panelTabs = [['盘', 30, 'a'], ['指', 22], ['L2', 31, 'h'], ['诊', 24], ['分', 26], ['统', 27], ['筹', 25], ['焰', 26]];

const periods = [
  ['分时', 37], ['1分', 35], ['5分', 34], ['15分', 38, true], ['30分', 40], ['60分', 36],
  ['日', 29, false, 16], ['周', 25, false, 16], ['月', 23, false, 16], ['季', 24, false, 16], ['年', 23, false, 16], ['多周期', 62, false, 14],
];

const App = () => {
  return (
    <Page>
      <GlobalStyle />
      <TitleBar>
        {['系统', '报价', '分析', '扩展行情'].map((m) => (
          <MenuItem key={m}>{m}</MenuItem>
        ))}
        <LevelSlot $level>LEVEL-2</LevelSlot>
        {['委托', '智能', '工具', '资讯', '帮助'].map((m) => (
          <MenuItem key={m}>{m}</MenuItem>
        ))}
        <Logo>同花顺</Logo>
        <AppTitle>- 深圳Level-2技术分析大屏</AppTitle>
        <Slogan>一招选出好股票！</Slogan>
        <UserName>cory614</UserName>
        <FadedIcon $ml={6} width={14} height={12} viewBox="0 0 14 12">
          <path d="M7 0c3 0 3 4 4 7l2 3H1l2 -3c1 -3 1 -7 4 -7z" fill="#777" />
        </FadedIcon>
        <FadedIcon $ml={11} width={20} height={12} viewBox="0 0 20 12">
          <path d="M5 0h10l5 3l-3 3h-1v6H4V6H3L0 3z" fill="#888" />
        </FadedIcon>
        <NewsBtn>资讯</NewsBtn>
        <AccountBtn>华泰-赵*新 ▾</AccountBtn>
        <WinGroup>
          <WinBtn>–</WinBtn>
          <WinBtn>❐</WinBtn>
          <WinBtn>✕</WinBtn>
        </WinGroup>
      </TitleBar>

      <Toolbar>
        <Slot $w={37}>
          <Face $tall>
            <svg width={24} height={36} viewBox="0 0 24 36">
              <path d="M1 8h11v10H1z" fill="#e85050" />
              <path d="M12 8h11v10H12z" fill="#f0c840" />
              <path d="M1 18h11v10H1z" fill="#60b050" />
              <path d="M12 18h11v10H12z" fill="#5090d0" />
            </svg>
          </Face>
        </Slot>
        {tools.map((t, i) => (
          <Slot key={i} $w={t.w} $ml={t.ml}>
            <Face>
              <svg width={26} height={25} viewBox="0 0 26 25">{t.icon}</svg>
            </Face>
          </Slot>
        ))}
        <Sep $ml={3} />
        {tools2.map((t) => (
          <Slot key={t.text} $w={t.w} $ml={t.ml}>
            <Face>
              <BlueGlyph $size={15} $color={t.color}>{t.text}</BlueGlyph>
            </Face>
          </Slot>
        ))}
        <Slot $w={22} $ml={10}>
          <Face>
            <svg width={20} height={24} viewBox="0 0 20 24">
              <path d="M5 12V7a5 5 0 0 1 10 0v5" fill="none" stroke="#777" strokeWidth="2.5" />
              <rect x="3" y="12" width="14" height="10" fill="#bbb" />
            </svg>
          </Face>
        </Slot>
        <Sep $ml={5} />
        {tools3.map((t, i) => (
          <Slot key={i} $w={t.w} $ml={t.ml}>
            <Face>
              <svg width={36} height={25} viewBox="0 0 36 25">{t.icon}</svg>
            </Face>
          </Slot>
        ))}
        <Sep $ml={4} />
        <Slot $w={37} $ml={1}>
          <Face>
            <svg width={20} height={20} viewBox="0 0 20 20">
              <rect x="1" y="2" width="18" height="16" fill="#5b8ec9" stroke="#2d5f9c" />
              <circle cx="10" cy="10" r="5" fill="#cfe2f6" />
            </svg>
            <SplitArrow />
          </Face>
          <ToolLabel>选股</ToolLabel>
        </Slot>
        <Slot $w={37} $ml={5}>
          <Face>
            <BlueGlyph $size={22}>论</BlueGlyph>
          </Face>
          <ToolLabel>论股堂</ToolLabel>
        </Slot>
        <Slot $w={38} $ml={7}>
          <Face>
            <BlueGlyph $size={14} $font={SANS} $color="#2650b5">NEWS</BlueGlyph>
          </Face>
          <ToolLabel>资讯</ToolLabel>
        </Slot>
        <Slot $w={26} $ml={4}>
          <Face>
            <svg width={22} height={23} viewBox="0 0 22 23">
              <path d="M3 21V14h3v7zM8 21V9h3v12zM13 21V12h3v9zM18 21V15h3v6z" fill="#d83030" />
              <path d="M3 3h16v5H3z" fill="#2d6cc0" />
            </svg>
          </Face>
          <ToolLabel>DDE</ToolLabel>
        </Slot>
        <Slot $w={38} $ml={6}>
          <Face>
            <svg width={24} height={22} viewBox="0 0 24 22">
              <rect x="2" y="3" width="20" height="13" fill="#cfe2f6" stroke="#2d6cc0" strokeWidth="2" />
              <path d="M8 20h8M12 16v4" stroke="#2d6cc0" strokeWidth="2" />
            </svg>
          </Face>
          <ToolLabel>大屏</ToolLabel>
        </Slot>
        <Slot $w={44} $ml={6}>
          <Face $tall>
            <BlueGlyph $size={13.5} $weight={400} $lh="16px">预测</BlueGlyph>
          </Face>
        </Slot>
        {labelled.map((t) => (
          <Slot key={t.label} $w={t.w} $ml={t.ml}>
            <Face />
            <ToolLabel>{t.label}</ToolLabel>
          </Slot>
        ))}
        <Sep $ml={7} />
        <QuickGrid>
          {quick.map((q) => (
            <QuickBtn key={q}>{q}</QuickBtn>
          ))}
        </QuickGrid>
        <Sep $ml={5} />
        <Slot $w={38} $ml={6}>
          <Face>
            <svg width={24} height={22} viewBox="0 0 24 22">
              <rect x="1" y="2" width="19" height="18" fill="#cfe0f4" stroke="#4b7cb8" />
              <path d="M8 17l2 -5l8 -8l3 3l-8 8z" fill="#e8eef6" stroke="#c04848" />
            </svg>
            <SplitArrow />
          </Face>
          <ToolLabel>自定义</ToolLabel>
        </Slot>
        <Slot $w={38} $ml={7}>
          <Face>
            <svg width={24} height={22} viewBox="0 0 24 22">
              <rect x="1" y="2" width="20" height="18" fill="#dce8f6" stroke="#4b7cb8" />
              <path d="M4 6h8M4 10h14M4 14h14" stroke="#4b7cb8" />
            </svg>
            <SplitArrow />
          </Face>
          <ToolLabel>多窗口</ToolLabel>
        </Slot>
        <Slot $w={38} $ml={8}>
          <Face>
            <svg width={24} height={22} viewBox="0 0 24 22">
              <path d="M12 1L23 10H20V21H4V10H1Z" fill="#f4f4f4" stroke="#b07848" />
              <rect x="7" y="10" width="11" height="9" fill="#e4eef8" stroke="#7ea0c8" />
            </svg>
            <SplitArrow />
          </Face>
          <ToolLabel>默认页</ToolLabel>
        </Slot>
      </Toolbar>

      <Main>
        <SideTabs>
          {sideTabs.map((t) => (
            <SideTab key={t.text} $h={t.h} $active={t.active} $light={t.light}>
              {t.mark && <span>▸</span>}
              {t.text}
            </SideTab>
          ))}
        </SideTabs>

        <ChartColumn>
          <LegendRow $h={19}>
            <LegendText $color={GREY}>15分钟(复权)</LegendText>
            <LegendText $color={GREY} $ml={8}>二三四五</LegendText>
            <LegendText $color="#c8f0ff" $ml={5}>MA25: 11.39</LegendText>
            <LegendMark color={AQUA} />
            <LegendText $color="#ffff00" $ml={7}>MA60: 11.48</LegendText>
            <LegendMark color={AQUA} />
            <LegendText $color="#e070f0" $ml={7}>MA120: 11.42</LegendText>
            <LegendMark color={AQUA} />
            <LegendText $color="#00e600" $ml={6}>MA250: 11.48</LegendText>
            <LegendMark color={AQUA} />
            <LegendText $color={RED} $ml={6}>MID: 11.40</LegendText>
            <LegendMark color={RED} up />
            <LegendText $color={RED} $ml={7}>UPPER: 11.44</LegendText>
            <LegendMark color={AQUA} />
            <ButtonStrip>
              {stripBtns.map(([t, w]) => (
                <StripBtn key={t} $w={w}>{t}</StripBtn>
              ))}
            </ButtonStrip>
          </LegendRow>
          <UpperChart />
          <LegendRow $h={19}>
            <LegendText $color={GREY}>MACD(12,26,9)</LegendText>
            <LegendText $color={RED} $ml={4}>MACD: +0.007</LegendText>
            <LegendMark color={AQUA} />
            <LegendText $color="#eee" $ml={5}>DIFF: -0.008</LegendText>
            <LegendMark color={AQUA} />
            <LegendText $color="#ffff00" $ml={6}>DEA: -0.012</LegendText>
            <LegendMark color="#ff2020" up />
            <ExplainBtn>指标说明</ExplainBtn>
          </LegendRow>
          <LowerChart />
          <IndicatorTabs>
            {indicators.map((t) => (
              <IndicatorTab key={t.t} $w={t.w} $ml={t.ml} $active={t.active} $flat={t.flat}>
                {t.t}
              </IndicatorTab>
            ))}
            <ScrollBtn>◂</ScrollBtn>
            <ScrollBtn>▸</ScrollBtn>
          </IndicatorTabs>
        </ChartColumn>

        <TickPanel>
          <TickHeader>
            逐笔成交明细
            <BigOrderTag>逐笔大单</BigOrderTag>
            <PauseBtn width={21} height={21} viewBox="0 0 22 22">
              <circle cx="11" cy="11" r="9.5" fill="#222" stroke="#999" strokeWidth="2" />
              <path d="M8 6.5h2v9H8zM12 6.5h2v9h-2z" fill="#ccc" />
            </PauseBtn>
          </TickHeader>
          <TickList>
            {ticks.map(([t, p, n, up, mark], i) => (
              <TickRow key={i} $dashed={mark === 'd'} $selected={mark === 's'}>
                <Num $color={t.length === 1 ? '#ffff00' : GREY}>{t}</Num>
                <Num $color={priceColor(p)}>{p}</Num>
                <Num $color={up ? RED : GREEN}>{n}</Num>
                <TickArrowCell>
                  <Arrow up={!!up} color={up ? RED : GREEN} />
                </TickArrowCell>
              </TickRow>
            ))}
          </TickList>
          {volumes.map(([t, p, n, dir, last], i) => (
            <VolumeRow key={i}>
              <Num $align="left">{t}</Num>
              <Num $color={priceColor(p)}>{p}</Num>
              <Num $color={dir === 2 ? '#fff' : dir ? RED : GREEN}>{n}</Num>
              <TickArrowCell>
                <Arrow up={dir > 0} color={dir === 2 ? '#fff' : dir ? RED : GREEN} />
              </TickArrowCell>
              <Num $color={CYAN}>{last}</Num>
            </VolumeRow>
          ))}
        </TickPanel>

        <QuotePanel>
          <NameRow>
            <GoldStar /><GoldStar /><GoldStar /><GoldStar /><GoldStar />
            <StockName>二三四五</StockName>
            <StockCode>002195</StockCode>
          </NameRow>
          <QuoteRow $h={23} $line>
            <QuoteCell><Label>委比</Label><Num $color={GREEN}>-30.87%</Num></QuoteCell>
            <Gap />
            <QuoteCell><span /><Num $color={GREEN}>-17714</Num></QuoteCell>
          </QuoteRow>
          <QuoteRow $h={23} $line>
            <QuoteCell><Label>均卖价</Label><Num $color={RED}>11.78</Num></QuoteCell>
            <Gap />
            <QuoteCell><Label>总卖量</Label><Num $color={CYAN}>37553</Num></QuoteCell>
          </QuoteRow>
          <Book $h={215}>
            <BookSide><span>卖</span><span>盘</span></BookSide>
            <BookRows $mt={-2}>
              {sells.map(([lv, p, v]) => (
                <BookRow key={lv}>
                  <Num $align="left">{lv}</Num>
                  <Num $color={p === '11.29' ? '#fff' : RED}>{p}</Num>
                  <Num $color={CYAN}>{v}</Num>
                </BookRow>
              ))}
            </BookRows>
          </Book>
          <Book $h={216}>
            <BookSide><span>买</span><span>盘</span></BookSide>
            <BookRows>
              {buys.map(([lv, p, v]) => (
                <BookRow key={lv}>
                  <Num $align="left">{lv}</Num>
                  <Num $color={GREEN}>{p}</Num>
                  <Num $color={CYAN}>{v}</Num>
                </BookRow>
              ))}
            </BookRows>
          </Book>
          <QuoteRow $h={21}>
            <QuoteCell><Label>均买价</Label><Num $color={GREEN}>11.17</Num></QuoteCell>
            <Gap />
            <QuoteCell><Label>总买量</Label><Num $color={CYAN}>19839</Num></QuoteCell>
          </QuoteRow>
          <QuoteRow $h={21} $line>
            <QuoteCell><Label>总笔数</Label><Num $color={CYAN}>2493</Num></QuoteCell>
            <Gap />
            <QuoteCell><Label>均笔量</Label><Num $color={CYAN}>14</Num></QuoteCell>
          </QuoteRow>
          <SectorRow>
            <SectorCell>计算机应用<PercentSmall>0.14%</PercentSmall></SectorCell>
            <CompareCell>同行业比较</CompareCell>
          </SectorRow>
          <Stats>
            {stats.map(([a, av, ac, b, bv, bc]) => (
              <QuoteRow key={a} $h={19}>
                <QuoteCell><Label>{a}</Label><Num $color={ac}>{av}</Num></QuoteCell>
                <Gap />
                <QuoteCell><Label>{b}</Label><Num $color={bc}>{bv}</Num></QuoteCell>
              </QuoteRow>
            ))}
          </Stats>
          <QuoteRow $h={18}>
            <QuoteCell><Label>外盘</Label><Num $color={RED}>11761</Num></QuoteCell>
            <Gap />
            <QuoteCell><Label>内盘</Label><Num $color={GREEN}>23606</Num></QuoteCell>
          </QuoteRow>
          <PanelTabs>
            {panelTabs.map(([t, w, k]) => (
              <PanelTab key={t} $w={w} $active={k === 'a'} $hot={k === 'h'}>{t}</PanelTab>
            ))}
            <ScrollBtn $ml={2}>◂</ScrollBtn>
            <ScrollBtn $ml={3}>▸</ScrollBtn>
          </PanelTabs>
        </QuotePanel>
      </Main>

      <FloatBar>
        <FloatClose>×</FloatClose>
        <Grip />
        {periods.map(([t, w, on, size]) => (
          <PeriodBtn key={t} $w={w} $on={on} $size={size}>{t}</PeriodBtn>
        ))}
        <GearIcon width={18} height={18} viewBox="0 0 24 24">
          <path
            d="M12 1l2 3 3.5-.8 .8 3.5 3.5 .8-.8 3.5 2 2.5-2 2.5 .8 3.5-3.5 .8-.8 3.5-3.5-.8-2 3-2-3-3.5 .8-.8-3.5-3.5-.8 .8-3.5-2-2.5 2-2.5-.8-3.5 3.5-.8 .8-3.5 3.5 .8z"
            fill="#2f6fb0"
          />
          <circle cx="12" cy="12" r="4" fill="#f1f1f1" />
        </GearIcon>
      </FloatBar>

      <AccountPanel>
        <svg width={26} height={25} viewBox="0 0 26 25">
          <rect x="3" y="1" width="22" height="23" rx="2" fill="#f0ece4" />
          <rect x="3" y="1" width="3" height="23" fill="#d02828" />
          <path d="M11 9h10v8H11z" fill="#d65a48" />
          <path d="M14 11h4v4h-4z" fill="#f0ece4" />
        </svg>
        <AccountName>赵*新</AccountName>
        <TradeBtn $color="#f03030">买</TradeBtn>
        <TradeBtn $color="#3060e0">卖</TradeBtn>
        <TradeBtn $color="#8a8a8a">撤</TradeBtn>
        <PanelDivider />
        <svg width={17} height={14} viewBox="0 0 17 14">
          <path d="M5 1h11v8h-4M1 5h11v8H1z" fill="none" stroke="#c4c4c4" strokeWidth="2" />
        </svg>
      </AccountPanel>

      <Ball>70</Ball>
      <Note $x={584} $y={723}>15分钟两次底背离<NoteComma>，</NoteComma></Note>
      <Note $x={585} $y={776}>应该有个小反弹</Note>
    </Page>
  );
};

export default App;
